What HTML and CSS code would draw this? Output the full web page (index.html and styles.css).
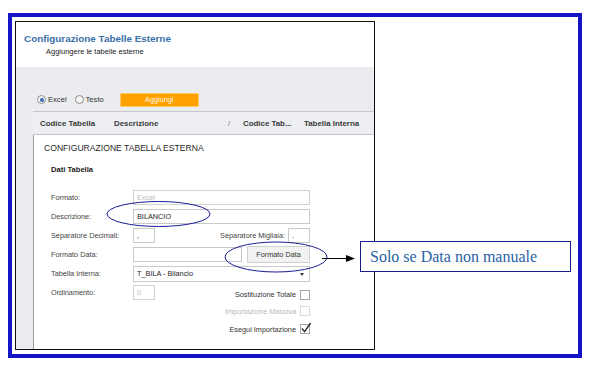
FILE: index.html
```html
<!DOCTYPE html>
<html lang="it">
<head>
    <meta charset="UTF-8">
    <title>Configurazione Tabelle Esterne</title>
    <link rel="stylesheet" href="styles.css">
</head>
<body>
<div class="frame">
    <div class="shot">
        <div class="head">
            <div class="title">Configurazione Tabelle Esterne</div>
            <div class="subtitle">Aggiungere le tabelle esterne</div>
        </div>
        <div class="panel">
            <div class="toolbar">
                <span class="radio"><span class="dot on"></span>Excel</span>
                <span class="radio"><span class="dot"></span>Testo</span>
                <span class="btn-add">Aggiungi</span>
            </div>
            <div class="main">
                <div class="grid-head">
                    <span class="c1">Codice Tabella</span>
                    <span class="c2">Descrizione</span>
                    <span class="c3">/</span>
                    <span class="c4">Codice Tab...</span>
                    <span class="c5">Tabella Interna</span>
                </div>
                <div class="form">
                    <div class="form-title">CONFIGURAZIONE TABELLA ESTERNA</div>
                    <div class="group">
                        <div class="group-title">Dati Tabella</div>
                        <div class="rows">
                            <div class="row">
                                <span class="lbl">Formato:</span>
                                <span class="field wide disabled">Excel</span>
                            </div>
                            <div class="row">
                                <span class="lbl">Descrizione:</span>
                                <span class="field wide">BILANCIO</span>
                            </div>
                            <div class="row">
                                <span class="lbl">Separatore Decimali:</span>
                                <span class="field small">,</span>
                                <span class="lbl-right">Separatore Migliaia:</span>
                                <span class="field small">.</span>
                            </div>
                            <div class="row">
                                <span class="lbl">Formato Data:</span>
                                <span class="field date"></span>
                                <span class="btn">Formato Data</span>
                            </div>
                            <div class="row">
                                <span class="lbl">Tabella Interna:</span>
                                <span class="field wide select">T_BILA - Bilancio<span class="caret"></span></span>
                            </div>
                            <div class="row">
                                <span class="lbl">Ordinamento:</span>
                                <span class="field small disabled">0</span>
                                <span class="check">Sostituzione Totale<span class="box"></span></span>
                            </div>
                            <div class="row check-row">
                                <span class="check off">Importazione Massiva<span class="box"></span></span>
                            </div>
                            <div class="row check-row">
                                <span class="check">Esegui Importazione<span class="box">
                                    <svg width="12" height="12" viewBox="0 0 12 12"><path d="M2 6.5 L4.6 9.6 L10.6 1" fill="none" stroke="#2b2b2b" stroke-width="1.4"/></svg>
                                </span></span>
                            </div>
                        </div>
                    </div>
                </div>
            </div>
        </div>
    </div>
</div>

<svg class="marks" width="594" height="368" viewBox="0 0 594 368">
    <ellipse cx="158.5" cy="214" rx="51.5" ry="12.5" fill="none" stroke="#1c1c9a" stroke-width="1"/>
    <ellipse cx="276" cy="257" rx="51" ry="15" fill="none" stroke="#1c1c9a" stroke-width="1"/>
    <line x1="322" y1="258.5" x2="348" y2="258.5" stroke="#000" stroke-width="1"/>
    <polygon points="346,255 355,258.5 346,262" fill="#000"/>
</svg>

<div class="callout">Solo se Data non manuale</div>
</body>
</html>
```

FILE: styles.css
```css
* {
    margin: 0;
    padding: 0;
    box-sizing: border-box;
}

html, body {
    background: #fff;
}

body {
    position: relative;
    width: 594px;
    height: 368px;
    overflow: hidden;
    font-family: "Liberation Sans", Arial, sans-serif;
    color: #333;
}

.frame {
    margin: 13px 0 0 8px;
    width: 574px;
    height: 345px;
    border: 4px solid #1414c4;
    padding: 4px 0 0 3px;
}

.shot {
    width: 360px;
    height: 329px;
    border: 1px solid #111;
    display: flex;
    flex-direction: column;
}

.head {
    height: 45px;
    padding: 11px 0 0 8px;
    background: #fff;
}

.title {
    font-size: 9.9px;
    font-weight: bold;
    line-height: 12px;
    color: #3a6fa8;
}

.subtitle {
    margin: 2px 0 0 22px;
    font-size: 7.5px;
    line-height: 10px;
    color: #222;
}

.panel {
    flex: 1;
    display: flex;
    flex-direction: column;
    background: #ebecf0;
}

.toolbar {
    height: 44px;
    padding: 26px 0 0 21px;
    display: flex;
    align-items: flex-start;
    font-size: 7.6px;
    color: #333;
}

.radio {
    display: flex;
    align-items: center;
    height: 13px;
    margin-right: 8px;
}

.dot {
    width: 9px;
    height: 9px;
    border-radius: 50%;
    border: 1px solid #8e8e8e;
    background: #f4f4f4;
    margin-right: 2px;
    display: flex;
    align-items: center;
    justify-content: center;
}

.dot.on::after {
    content: "";
    width: 4px;
    height: 4px;
    border-radius: 50%;
    background: #3b69b3;
}

.btn-add {
    margin-left: 8px;
    width: 79px;
    height: 14px;
    line-height: 12px;
    background: #ffa200;
    border: 1px solid #ffc966;
    color: #fff6e6;
    text-align: center;
    font-size: 7.3px;
}

.main {
    flex: 1;
    margin-left: 17px;
    display: flex;
    flex-direction: column;
}

.grid-head {
    height: 24px;
    display: flex;
    align-items: center;
    background: #eceef1;
    border-top: 1px solid #c6c7cb;
    border-bottom: 1px solid #c6c7cb;
    font-size: 7.9px;
    font-weight: bold;
    color: #3a3a3a;
    white-space: nowrap;
}

.grid-head .c1 { width: 81px; padding-left: 7px; }
.grid-head .c2 { width: 114px; }
.grid-head .c3 { width: 15px; font-weight: normal; color: #777; }
.grid-head .c4 { width: 61px; }

.form {
    flex: 1;
    background: #fff;
    border-left: 1px solid #9c9c9c;
    padding: 7px 0 0 10px;
}

.form-title {
    font-size: 8.6px;
    line-height: 12px;
    color: #2a2a2a;
}

.group {
    margin-top: 10px;
    padding-left: 7px;
}

.group-title {
    font-size: 7.6px;
    font-weight: bold;
    line-height: 12px;
    color: #222;
}

.rows {
    margin-top: 14px;
    display: flex;
    flex-direction: column;
    gap: 4px;
    width: 259px;
}

.row {
    display: flex;
    align-items: center;
    height: 15px;
    font-size: 7.3px;
    color: #444;
}

.row.check-row {
    height: 14px;
    justify-content: flex-end;
}

.lbl {
    width: 82px;
    flex-shrink: 0;
}

.lbl-right {
    margin-left: auto;
    margin-right: 3px;
}

.field {
    height: 15px;
    border: 1px solid #c9c9c9;
    background: #fff;
    padding-left: 3px;
    line-height: 13px;
    font-size: 7.3px;
    color: #1e1e1e;
    white-space: nowrap;
}

.field.wide { width: 177px; }
.field.small { width: 22px; }
.field.date { width: 109px; }

.field.disabled {
    color: #bdbdbd;
    border-color: #d2d2d2;
}

.field.select {
    height: 16px;
    position: relative;
}

.caret {
    position: absolute;
    right: 5px;
    top: 6px;
    border-left: 2.5px solid transparent;
    border-right: 2.5px solid transparent;
    border-top: 3px solid #333;
}

.btn {
    margin-left: auto;
    width: 63px;
    height: 17px;
    line-height: 15px;
    border: 1px solid #d0d0d0;
    background: #f2f2f2;
    text-align: center;
    color: #333;
    font-size: 7.3px;
}

.check {
    margin-left: auto;
    display: flex;
    align-items: center;
    color: #333;
    font-size: 7.3px;
    position: relative;
    top: 2px;
}

.check-row .check {
    top: 0;
}

.box {
    width: 10px;
    height: 10px;
    margin-left: 4px;
    border: 1px solid #a6a6a6;
    background: #fff;
    position: relative;
}

.box svg {
    position: absolute;
    left: -1px;
    top: -3px;
}

.check.off {
    color: #b9b9b9;
}

.check.off .box {
    border-color: #dadada;
}

.marks {
    position: absolute;
    left: 0;
    top: 0;
}

.callout {
    position: absolute;
    left: 360px;
    top: 241px;
    width: 211px;
    height: 31px;
    border: 1px solid #1a1a8e;
    background: #fff;
    padding-left: 9px;
    font-family: "Liberation Serif", "Times New Roman", serif;
    font-size: 16px;
    line-height: 29px;
    color: #2a62a6;
}
```
